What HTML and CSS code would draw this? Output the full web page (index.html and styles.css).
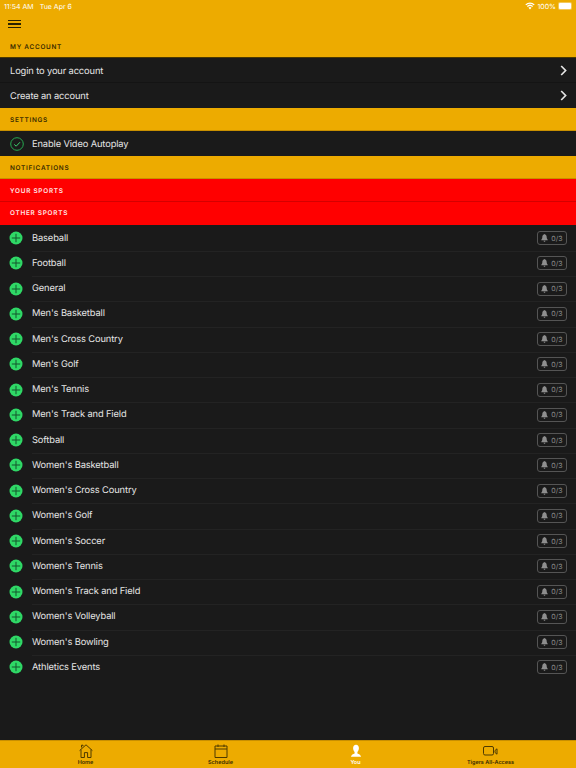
FILE: index.html
```html
<!DOCTYPE html>
<html>
<head>
<meta charset="utf-8">
<title>You</title>
<link rel="stylesheet" href="styles.css">
</head>
<body>
<div class="page">

<!-- status bar -->
<div class="status">
    <span class="time">11:54 AM</span><span class="date">Tue Apr 6</span>
    <span class="status-right">
        <svg class="wifi" width="10" height="8" viewBox="0 0 12 9"><path d="M6 8.600 4.200 6.600a2.600 2.600 0 0 1 3.600 0zM3.300 5.700 2.300 4.600a5.300 5.300 0 0 1 7.400 0l-1 1.100a3.900 3.900 0 0 0-5.400 0zM1.400 3.700.4 2.600a8 8 0 0 1 11.200 0l-1 1.100a6.600 6.600 0 0 0-9.200 0z" fill="#fff"/></svg>
        <span>100%</span>
        <span class="battery"><span class="battery-fill"></span></span>
    </span>
</div>

<div class="topbar">
    <div class="burger"><span></span><span></span><span></span></div>
</div>

<div class="head head-first">MY ACCOUNT</div>
<div class="row line">
    <span class="name flush">Login to your account</span>
    <svg class="chev" width="7" height="11" viewBox="0 0 7 11"><path d="M1.200 1 5.600 5.500 1.200 10" fill="none" stroke="#e4e4e4" stroke-width="1.700"/></svg>
</div>
<div class="row">
    <span class="name flush">Create an account</span>
    <svg class="chev" width="7" height="11" viewBox="0 0 7 11"><path d="M1.200 1 5.600 5.500 1.200 10" fill="none" stroke="#e4e4e4" stroke-width="1.700"/></svg>
</div>

<div class="head">SETTINGS</div>
<div class="row">
    <svg class="mark" width="14" height="14" viewBox="0 0 14 14"><circle cx="7" cy="7" r="6.300" fill="none" stroke="#27a850" stroke-width="1"/><path d="M4.200 7.400 6.200 9.200 10 5.200" fill="none" stroke="#3fd16f" stroke-width="1"/></svg>
    <span class="name">Enable Video Autoplay</span>
</div>

<div class="head">NOTIFICATIONS</div>
<div class="head red">YOUR SPORTS</div>
<div class="head red">OTHER SPORTS</div>

<div class="list" id="sports"></div>

<div class="tabs">
    <div class="tab">
        <svg width="14" height="14" viewBox="0 0 14 14"><path d="M.6 6.600 7 .8l6.400 5.800M2 5.600v7.900h3.400V8.600h3.200v4.900H12V5.600M2.500 3.500V1.200h1.500v1" fill="none" stroke="#4d3a00" stroke-width="1"/></svg>
        <span>Home</span>
    </div>
    <div class="tab">
        <svg width="14" height="14" viewBox="0 0 14 14"><path d="M1 2h12v11.500H1zM1 5h12M4 .5V3M10 .5V3" fill="none" stroke="#4d3a00" stroke-width="1"/></svg>
        <span>Schedule</span>
    </div>
    <div class="tab on">
        <svg width="14" height="14" viewBox="0 0 14 14"><path d="M7 .8c1.800 0 2.900 1.300 2.900 3.200 0 1.700-.7 3.100-1.500 4v1.400c1.500.6 3.100 1.200 3.700 3.400H1.900c.6-2.200 2.200-2.800 3.700-3.400V8C4.800 7.100 4.100 5.700 4.100 4 4.100 2.100 5.200.8 7 .8z" fill="#fff"/></svg>
        <span>You</span>
    </div>
    <div class="tab">
        <svg width="15" height="14" viewBox="0 0 15 14"><rect x=".5" y="2.500" width="10" height="8.500" rx="1.500" fill="none" stroke="#4d3a00"/><path d="M12 6.500 14 4.800v5.400L12 8.500z" fill="none" stroke="#4d3a00"/></svg>
        <span>Tigers All-Access</span>
    </div>
</div>

</div>

<script>
let sports = ["Baseball","Football","General","Men's Basketball","Men's Cross Country","Men's Golf","Men's Tennis","Men's Track and Field","Softball","Women's Basketball","Women's Cross Country","Women's Golf","Women's Soccer","Women's Tennis","Women's Track and Field","Women's Volleyball","Women's Bowling","Athletics Events"]

let html = ""
for(let i = 0; i < sports.length; i++){
    html += '<div class="sport">'
    html += '<svg class="mark" width="14" height="14" viewBox="0 0 14 14"><circle cx="7" cy="7" r="6.500" fill="#2fd866"/><path d="M7 2.800v8.400M2.800 7h8.400" stroke="#14552c" stroke-width="1"/></svg>'
    html += '<span class="name">' + sports[i] + '</span>'
    html += '<span class="badge"><svg width="7" height="8" viewBox="0 0 8 9"><path d="M4 0c.4 0 .6.300.6.600C6 1 6.500 2.100 6.500 3.400c0 1.500.5 2.300 1.200 3V7H.3v-.6C1 5.700 1.500 4.900 1.500 3.400 1.500 2.100 2 1 3.400.6 3.400.3 3.600 0 4 0zM3 7.500h2C5 8.200 4.600 8.700 4 8.700S3 8.200 3 7.500z" fill="#8e8e8e"/></svg>0/3</span>'
    html += '</div>'
}
document.getElementById("sports").innerHTML = html
</script>
</body>
</html>
```
FILE: styles.css
```css
html, body {
    margin: 0;
    padding: 0;
}
body {
    font-family: Inter, "Liberation Sans", sans-serif;
    background-color: #1a1a1a;
    text-rendering: geometricPrecision;
}
.page {
    width: 576px;
    height: 768px;
    display: flex;
    flex-direction: column;
    overflow: hidden;
    background-color: #1a1a1a;
}
.status {
    height: 12px;
    background-color: #edab00;
    color: #fff;
    font-size: 7px;
    display: flex;
    align-items: center;
    padding: 0 4px;
    flex: none;
}
.date {
    margin-left: 6px;
}
.status-right {
    margin-left: auto;
    display: flex;
    align-items: center;
    gap: 2px;
}
.battery {
    width: 12px;
    height: 6px;
    padding: 1px;
    border-radius: 2px;
    background-color: rgba(255,255,255,.35);
    display: block;
}
.battery-fill {
    display: block;
    width: 100%;
    height: 100%;
    background-color: #fff;
    border-radius: 1px;
}
.topbar {
    height: 24px;
    background-color: #edab00;
    padding-left: 8px;
    display: flex;
    align-items: center;
    flex: none;
}
.burger {
    width: 13px;
    display: flex;
    flex-direction: column;
    gap: 2px;
}
.burger span {
    height: 1.500px;
    background-color: #2a2200;
}
.head {
    height: 23px;
    box-shadow: inset 0 -1px 0 #c88f00;
    background-color: #edab00;
    color: #3a2c00;
    font-size: 6.400px;
    font-weight: 600;
    letter-spacing: .75px;
    display: flex;
    align-items: center;
    padding-left: 10px;
    flex: none;
}
.head-first {
    height: 22px;
    box-shadow: inset 0 -1px 0 #4a3800;
}
.red {
    background-color: #ff0000;
    color: #ffe6e6;
    box-shadow: inset 0 -1px 0 #d40000;
}
.red + .red {
    height: 22.500px;
    box-shadow: none;
}
.row {
    height: 25px;
    display: flex;
    align-items: center;
    padding-left: 10px;
    color: #e6e6e6;
    font-size: 9.300px;
    letter-spacing: -.12px;
    flex: none;
    position: relative;
}
.row .name {
    padding-top: 1px;
}
.line {
    box-shadow: inset 0 -1px 0 #141414;
}
.name {
    margin-left: 8px;
}
.flush {
    margin-left: 0;
}
.chev {
    margin-left: auto;
    margin-right: 9px;
}
.list {
    flex: 1;
    padding-top: 1px;
}
.sport {
    height: 25.250px;
    box-sizing: border-box;
    display: flex;
    align-items: center;
    padding: 0 9px 0 9px;
    color: #e6e6e6;
    font-size: 9.300px;
    letter-spacing: -.12px;
    position: relative;
}
.sport .name {
    margin-left: 9px;
}
.sport + .sport::before {
    content: "";
    position: absolute;
    left: 32px;
    right: 0;
    top: 0;
    height: 1px;
    background-color: #232323;
}
.mark {
    flex: none;
}
.badge {
    margin-left: auto;
    width: 30px;
    height: 14px;
    box-sizing: border-box;
    border: 1px solid #555;
    border-radius: 3px;
    color: #8e8e8e;
    font-size: 7px;
    letter-spacing: 0;
    display: flex;
    align-items: center;
    justify-content: center;
    gap: 3px;
}
.tabs {
    height: 28px;
    box-sizing: border-box;
    border-top: 1px solid #c88f00;
    background-color: #edab00;
    padding: 3px 18px 0;
    display: grid;
    grid-template-columns: repeat(4, 1fr);
    flex: none;
}
.tab {
    display: flex;
    flex-direction: column;
    align-items: center;
    gap: 2px;
    color: #3a2c00;
    font-size: 5.500px;
    font-weight: 600;
}
.tab.on {
    color: #fff;
}
```
